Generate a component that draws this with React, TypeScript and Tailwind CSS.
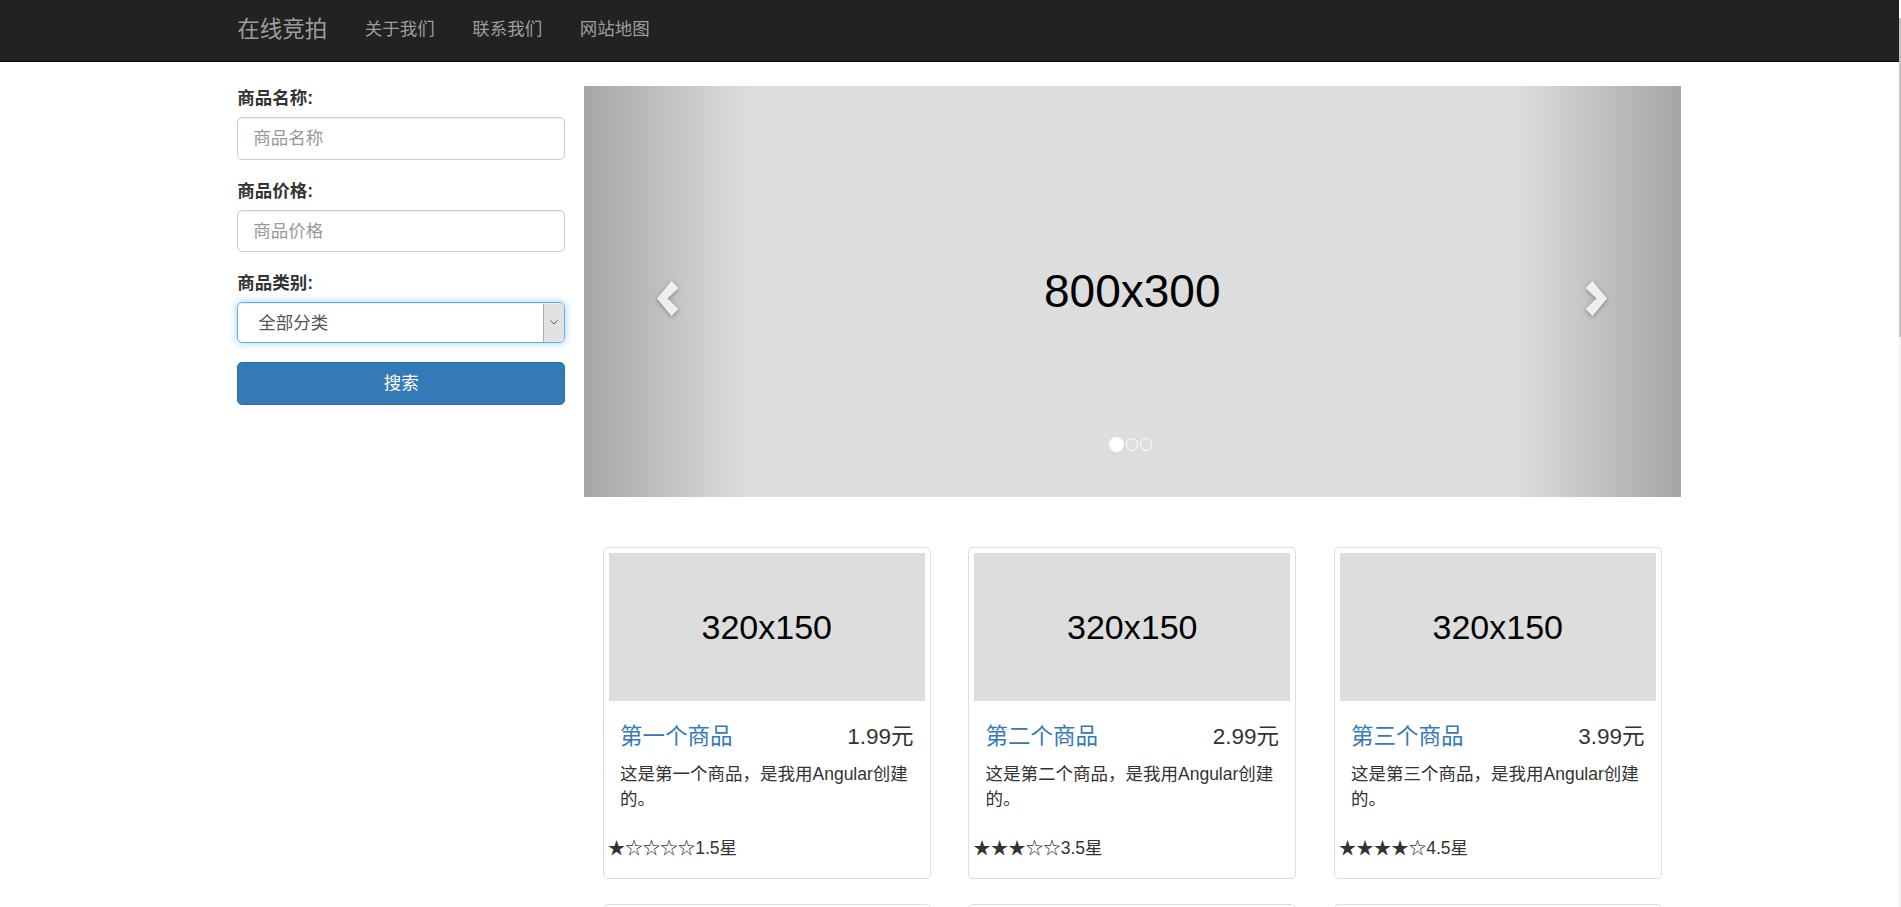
import React from "react";

const products = [
  { id: 1, title: "第一个商品", price: "1.99", rating: 1.5, desc: "这是第一个商品，是我用Angular创建的。" },
  { id: 2, title: "第二个商品", price: "2.99", rating: 3.5, desc: "这是第二个商品，是我用Angular创建的。" },
  { id: 3, title: "第三个商品", price: "3.99", rating: 4.5, desc: "这是第三个商品，是我用Angular创建的。" },
];

// next row of cards, only their top edge shows in the viewport
const nextRow = [4, 5, 6];

const navLinks = ["关于我们", "联系我们", "网站地图"];

const Stars = ({ rating }: { rating: number }) => {
  const full = Math.floor(rating);
  return <>{"★".repeat(full) + "☆".repeat(5 - full)}</>;
};

const Chevron = ({ dir }: { dir: "left" | "right" }) => (
  <svg width="22" height="35" viewBox="0 0 22 35" className="drop-shadow-[0_1px_2px_rgba(0,0,0,0.35)]">
    {dir === "left" ? (
      <polygon points="14.5,0 21.5,7 10.5,17.5 21.5,28 14.5,35 0,17.5" fill="#efefef" />
    ) : (
      <polygon points="7.5,0 0.5,7 11.5,17.5 0.5,28 7.5,35 22,17.5" fill="#efefef" />
    )}
  </svg>
);

const Field = ({ label, placeholder }: { label: string; placeholder: string }) => (
  <div className="mb-[18.75px]">
    <label className="block mb-[6.25px] text-[17.5px] leading-[25px] font-bold text-[#333]">{label}</label>
    <input
      className="block w-full h-[42.5px] px-[15px] text-[17.5px] text-[#555] border border-[#ccc] rounded-[5px] shadow-[inset_0_1px_1px_rgba(0,0,0,0.075)] outline-none placeholder:text-[#999]"
      placeholder={placeholder}
    />
  </div>
);

const App = () => {
  return (
    <div className="w-[1901px] h-[907px] overflow-hidden flex bg-white font-['Liberation_Sans','Noto_Sans_CJK_SC',sans-serif] text-[#333]">
      <div className="flex-1 min-w-0">
        {/* Navbar */}
        <nav className="h-[62px] bg-[#222] border-b border-[#080808]">
          <div className="w-[1462px] mx-auto h-full flex items-center pb-[2px]">
            <a className="px-[18.75px] text-[22.5px] leading-[25px] text-[#9d9d9d]">在线竞拍</a>
            <ul className="flex">
              {navLinks.map((link) => (
                <li key={link}>
                  <a className="px-[18.75px] text-[17.5px] leading-[25px] text-[#9d9d9d]">{link}</a>
                </li>
              ))}
            </ul>
          </div>
        </nav>

        <div className="w-[1462px] mx-auto mt-[24px] grid grid-cols-[365.5px_1fr]">
          {/* Search form */}
          <div className="px-[18.75px]">
            <Field label="商品名称:" placeholder="商品名称" />
            <Field label="商品价格:" placeholder="商品价格" />
            <div className="mb-[18.75px]">
              <label className="block mb-[6.25px] text-[17.5px] leading-[25px] font-bold text-[#333]">商品类别:</label>
              <div className="flex h-[41px] border border-[#66afe9] rounded-[5px] shadow-[inset_0_1px_1px_rgba(0,0,0,0.075),0_0_8px_rgba(102,175,233,0.6)] overflow-hidden">
                <span className="flex-1 flex items-center pl-[20px] text-[17.5px] text-[#555]">全部分类</span>
                <span className="w-[21px] my-[0.5px] mr-[0.5px] flex items-center justify-center bg-[#e1e1e1] border-l border-[#adadad]">
                  <svg width="8" height="5" viewBox="0 0 8 5">
                    <polyline points="0.5,0.5 4,4 7.5,0.5" fill="none" stroke="#555" strokeWidth="1" />
                  </svg>
                </span>
              </div>
            </div>
            <button className="w-full h-[42.5px] bg-[#337ab7] border border-[#2e6da4] rounded-[5px] text-white text-[17.5px]">
              搜索
            </button>
          </div>

          {/* Main column */}
          <div>
            {/* Carousel */}
            <div className="relative h-[411px] bg-[#ddd] flex items-center justify-center">
              <span className="text-[46px] text-black">800x300</span>
              <div className="absolute inset-y-0 left-0 w-[15%] bg-[linear-gradient(to_right,rgba(0,0,0,0.25),rgba(0,0,0,0))] flex items-center justify-center pt-[13px] pl-[4px]">
                <Chevron dir="left" />
              </div>
              <div className="absolute inset-y-0 right-0 w-[15%] bg-[linear-gradient(to_left,rgba(0,0,0,0.25),rgba(0,0,0,0))] flex items-center justify-center pt-[13px] pr-[4px]">
                <Chevron dir="right" />
              </div>
              <div className="absolute bottom-[45px] left-0 right-0 flex items-center justify-center gap-[1.5px] pr-[3px]">
                <span className="w-[15px] h-[15px] rounded-full bg-white" />
                <span className="w-[12.5px] h-[12.5px] rounded-full border border-white" />
                <span className="w-[12.5px] h-[12.5px] rounded-full border border-white" />
              </div>
            </div>

            {/* Products */}
            <div className="mt-[50px] px-[18.75px] grid grid-cols-3 gap-x-[37.5px]">
              {products.map((p) => (
                <div key={p.id} className="border border-[#ddd] rounded-[5px] p-[5px] mb-[25px]">
                  <div className="h-[148px] bg-[#ddd] flex items-center justify-center text-[34px] text-black">320x150</div>
                  <div className="p-[11.25px]">
                    <h4 className="my-[12.5px] flex justify-between text-[22.5px] leading-[24.75px]">
                      <a className="text-[#337ab7]">{p.title}</a>
                      <span className="text-[#333]">{p.price}元</span>
                    </h4>
                    <p className="mb-[12.5px] text-[17.5px] leading-[25px]">{p.desc}</p>
                  </div>
                  <p className="mb-[12.5px] -ml-[1px] text-[17.5px] leading-[25px]">
                    <Stars rating={p.rating} />
                    {p.rating}星
                  </p>
                </div>
              ))}
              {nextRow.map((id) => (
                <div key={id} className="h-[331px] border border-[#ddd] rounded-[5px] p-[5px]" />
              ))}
            </div>
          </div>
        </div>
      </div>

      {/* Scrollbar */}
      <div className="w-[2px] bg-[#f1f1f1] flex flex-col">
        <div className="h-[18px] bg-white" />
        <div className="h-[319px] bg-[#c1c1c1]" />
      </div>
    </div>
  );
};

export default App;
